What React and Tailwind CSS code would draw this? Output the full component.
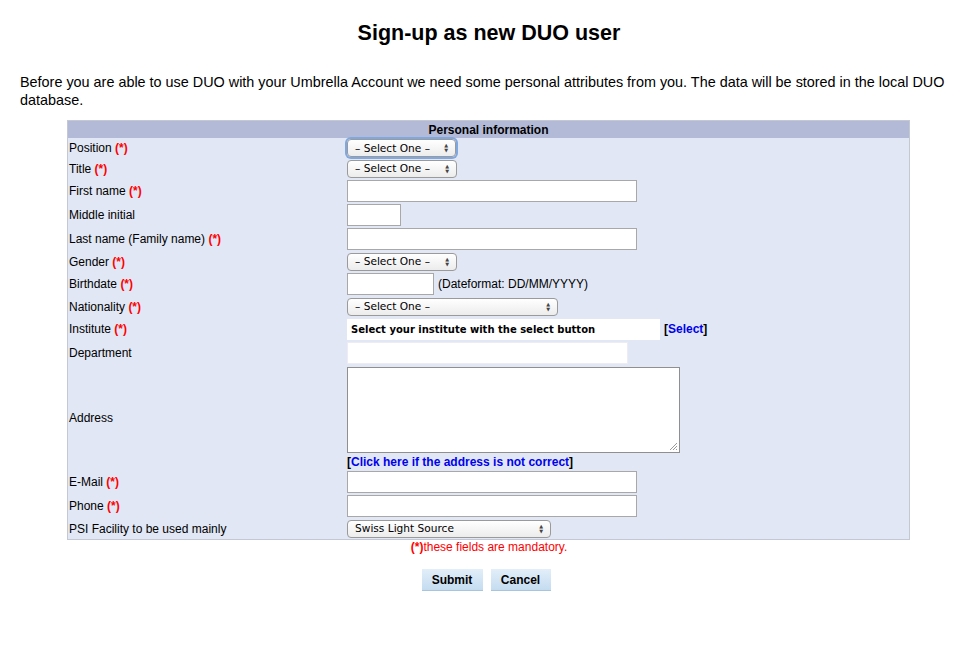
import React from "react";

const Req = () => <span className="font-bold text-[#ff0000]">(*)</span>;

function Sel({ w, label = "– Select One –", focus = false }) {
  return (
    <div
      className={`relative flex h-[18px] items-center rounded-[4px] border border-[#9a9a9a] bg-gradient-to-b from-white to-[#ececec] pl-[7px] text-[10.6px] leading-none text-black [font-family:'DejaVu_Sans',sans-serif] ${w} ${focus ? "shadow-[0_0_0_2px_#7fa7e0]" : ""}`}
    >
      <span>{label}</span>
      <span className="absolute right-[7px] top-[3px] flex flex-col items-center text-[5px] leading-[5px] text-[#444]">
        <span>▲</span>
        <span>▼</span>
      </span>
    </div>
  );
}

function Inp({ w, h = "h-[22px]", light = false }) {
  return (
    <div
      className={`${w} ${h} bg-white border ${light ? "border-[#ececf2]" : "border-[#a8a8a8]"}`}
    />
  );
}

function Row({ label, h, children }) {
  return (
    <div className={`flex ${h}`}>
      <div className="flex w-[279px] items-center pl-[1px]">{label}</div>
      <div className="flex flex-1 items-center">{children}</div>
    </div>
  );
}

export default function App() {
  return (
    <div className="min-h-[653px] w-[959px] bg-white text-black [font-family:'Liberation_Sans',Arial,sans-serif]">
      <h1 className="pt-[21px] pl-[19px] text-center text-[21.5px] font-bold leading-[24px]">
        Sign-up as new DUO user
      </h1>
      <p className="mt-[28px] pl-[20px] pr-[8px] text-[14.4px] leading-[18px]">
        Before you are able to use DUO with your Umbrella Account we need some personal attributes from you. The data will be stored in the local DUO database.
      </p>
      <div className="mx-[67px] mt-[11px] w-[843px] border border-[#c4c8d4] bg-[#e1e7f4] text-[12px]">
        <div className="flex h-[17px] items-center justify-center bg-[#b3bad7] font-bold leading-none">
          Personal information
        </div>
        <Row h="h-[20px]" label={<>Position&nbsp;<Req /></>}>
          <Sel w="w-[109px]" focus />
        </Row>
        <Row h="h-[21px]" label={<>Title&nbsp;<Req /></>}>
          <Sel w="w-[110px]" />
        </Row>
        <Row h="h-[24px]" label={<>First name&nbsp;<Req /></>}>
          <Inp w="w-[290px]" />
        </Row>
        <Row h="h-[24px]" label="Middle initial">
          <Inp w="w-[54px]" />
        </Row>
        <Row h="h-[24px]" label={<>Last name (Family name)&nbsp;<Req /></>}>
          <Inp w="w-[290px]" />
        </Row>
        <Row h="h-[21px]" label={<>Gender&nbsp;<Req /></>}>
          <Sel w="w-[110px]" />
        </Row>
        <Row h="h-[24px]" label={<>Birthdate&nbsp;<Req /></>}>
          <Inp w="w-[87px]" />
          <span className="ml-[4px]">(Dateformat: DD/MM/YYYY)</span>
        </Row>
        <Row h="h-[21px]" label={<>Nationality&nbsp;<Req /></>}>
          <Sel w="w-[211px]" />
        </Row>
        <Row h="h-[24px]" label={<>Institute&nbsp;<Req /></>}>
          <div className="flex h-[21px] w-[313px] items-center bg-white pl-[4px] text-[10px] font-bold [font-family:'DejaVu_Sans',sans-serif]">
            Select your institute with the select button
          </div>
          <span className="ml-[4px] font-bold">
            [<span className="text-[#0000ee]">Select</span>]
          </span>
        </Row>
        <Row h="h-[24px]" label="Department">
          <Inp w="w-[281px]" light />
        </Row>
        <div className="flex h-[105px]">
          <div className="flex w-[279px] items-center pl-[1px]">Address</div>
          <div className="flex flex-col pt-[2px]">
            <div className="relative h-[87px] w-[333px] border border-[#8f8f8f] bg-white">
              <svg className="absolute bottom-[1px] right-[1px]" width="10" height="10" viewBox="0 0 10 10">
                <path d="M9 2 L2 9 M9 5 L5 9 M9 8 L8 9" stroke="#9a9a9a" strokeWidth="1" />
              </svg>
            </div>
            <div className="mt-[1px] font-bold leading-[16px]">
              [<span className="text-[#0000ee]">Click here if the address is not correct</span>]
            </div>
          </div>
        </div>
        <Row h="h-[24px]" label={<>E-Mail&nbsp;<Req /></>}>
          <Inp w="w-[290px]" />
        </Row>
        <Row h="h-[24px]" label={<>Phone&nbsp;<Req /></>}>
          <Inp w="w-[290px]" />
        </Row>
        <Row h="h-[21px]" label="PSI Facility to be used mainly">
          <Sel w="w-[204px]" label="Swiss Light Source" />
        </Row>
      </div>
      <div className="pl-[19px] text-center text-[12px] leading-[14px] text-[#ff0000]">
        <span className="font-bold">(*)</span>these fields are mandatory.
      </div>
      <div className="mt-[15px] flex justify-center gap-[8px] pl-[13px]">
        <div className="flex h-[21px] w-[61px] items-center justify-center bg-gradient-to-b from-[#e3eef9] to-[#c4dcf0] text-[12px] font-bold shadow-[0_1px_0_#a9c4dd]">
          Submit
        </div>
        <div className="flex h-[21px] w-[60px] items-center justify-center bg-gradient-to-b from-[#e3eef9] to-[#c4dcf0] text-[12px] font-bold shadow-[0_1px_0_#a9c4dd]">
          Cancel
        </div>
      </div>
    </div>
  );
}
